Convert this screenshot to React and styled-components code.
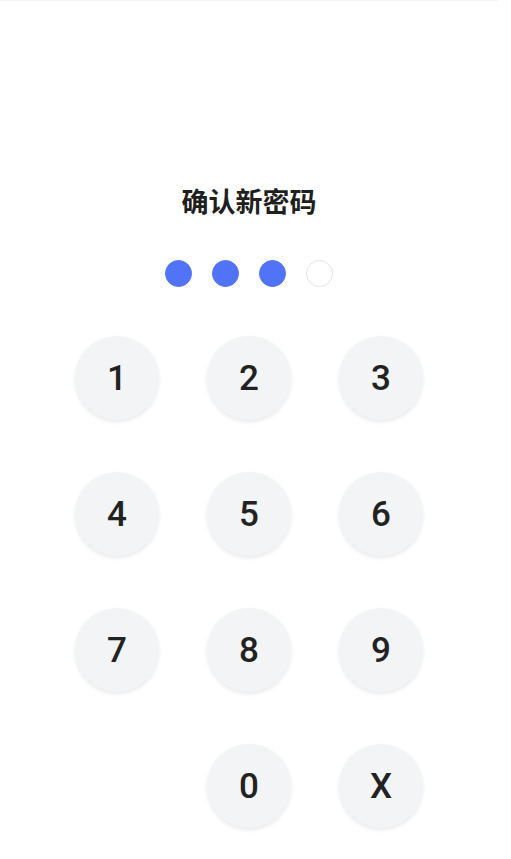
import React, { useState } from 'react'
import styled, { createGlobalStyle } from 'styled-components'

const GlobalStyle = createGlobalStyle`
html, body {
  margin: 0;
  padding: 0;
  background: #ffffff;
}
body {
  font-family: Roboto, "Noto Sans CJK SC", sans-serif;
}
`

const Page = styled.div`
width: 498px;
min-height: 859px;
border-top: 1px solid #f6f5f3;
box-sizing: border-box;
display: flex;
flex-direction: column;
align-items: center;
padding-top: 180px;
`

const Title = styled.h1`
margin: 0;
font-family: "Noto Sans CJK SC", sans-serif;
font-size: 27px;
font-weight: 700;
line-height: 40px;
color: #1f1f1f;
letter-spacing: 0;
`

const Dots = styled.div`
display: flex;
gap: 20px;
margin-top: 39px;
`

const Dot = styled.span`
width: 27px;
height: 27px;
border-radius: 50%;
box-sizing: border-box;
background: ${props => props.$filled ? '#5073f7' : '#ffffff'};
border: 1px solid ${props => props.$filled ? '#5073f7' : '#e4e4e4'};
`

const Pad = styled.div`
display: grid;
grid-template-columns: repeat(3, 84px);
grid-auto-rows: 84px;
column-gap: 48px;
row-gap: 52px;
margin-top: 49px;
`

const Key = styled.button`
width: 84px;
height: 84px;
border-radius: 50%;
border: none;
padding: 0;
background: #f3f4f6;
box-shadow: 0 2px 4px rgba(0, 0, 0, 0.09);
font-family: Roboto, sans-serif;
font-size: 35px;
font-weight: 500;
color: #222222;
display: flex;
align-items: center;
justify-content: center;
grid-column: ${props => props.$col || 'auto'};
cursor: pointer;
`

const keys = ['1', '2', '3', '4', '5', '6', '7', '8', '9']

const App = () => {
  const [code, setCode] = useState('123')

  const press = k => {
    if (k === 'X') setCode(c => c.slice(0, -1))
    else setCode(c => (c.length < 4 ? c + k : c))
  }

  return (
    <>
      <GlobalStyle />
      <Page>
        <Title>确认新密码</Title>
        <Dots>
          {[0, 1, 2, 3].map(i => (
            <Dot key={i} $filled={i < code.length} />
          ))}
        </Dots>
        <Pad>
          {keys.map(k => (
            <Key key={k} onClick={() => press(k)}>{k}</Key>
          ))}
          <Key $col={2} onClick={() => press('0')}>0</Key>
          <Key onClick={() => press('X')}>X</Key>
        </Pad>
      </Page>
    </>
  )
}

export default App
